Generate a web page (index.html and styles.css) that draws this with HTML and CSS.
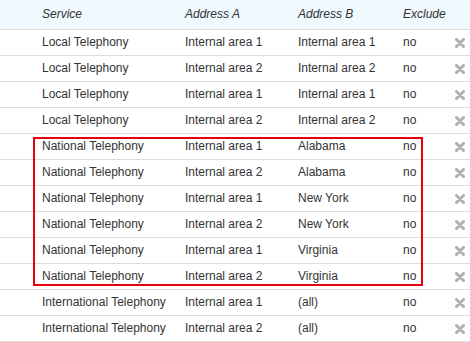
FILE: index.html
```html
<!DOCTYPE html>
<html>
<head>
<meta charset="utf-8">
<link rel="stylesheet" href="styles.css">
</head>
<body>
<div class="table">
  <div class="row head">
    <div></div>
    <div>Service</div>
    <div>Address A</div>
    <div>Address B</div>
    <div>Exclude</div>
    <div></div>
  </div>
  <div class="row"><div></div><div>Local Telephony</div><div>Internal area 1</div><div>Internal area 1</div><div>no</div><div class="act"><svg class="x" viewBox="0 0 10 10"><path d="M1.5 1.5L8.5 8.5M8.5 1.5L1.5 8.5"/></svg></div></div>
  <div class="row"><div></div><div>Local Telephony</div><div>Internal area 2</div><div>Internal area 2</div><div>no</div><div class="act"><svg class="x" viewBox="0 0 10 10"><path d="M1.5 1.5L8.5 8.5M8.5 1.5L1.5 8.5"/></svg></div></div>
  <div class="row"><div></div><div>Local Telephony</div><div>Internal area 1</div><div>Internal area 1</div><div>no</div><div class="act"><svg class="x" viewBox="0 0 10 10"><path d="M1.5 1.5L8.5 8.5M8.5 1.5L1.5 8.5"/></svg></div></div>
  <div class="row"><div></div><div>Local Telephony</div><div>Internal area 2</div><div>Internal area 2</div><div>no</div><div class="act"><svg class="x" viewBox="0 0 10 10"><path d="M1.5 1.5L8.5 8.5M8.5 1.5L1.5 8.5"/></svg></div></div>
  <div class="row"><div></div><div>National Telephony</div><div>Internal area 1</div><div>Alabama</div><div>no</div><div class="act"><svg class="x" viewBox="0 0 10 10"><path d="M1.5 1.5L8.5 8.5M8.5 1.5L1.5 8.5"/></svg></div></div>
  <div class="row"><div></div><div>National Telephony</div><div>Internal area 2</div><div>Alabama</div><div>no</div><div class="act"><svg class="x" viewBox="0 0 10 10"><path d="M1.5 1.5L8.5 8.5M8.5 1.5L1.5 8.5"/></svg></div></div>
  <div class="row"><div></div><div>National Telephony</div><div>Internal area 1</div><div>New York</div><div>no</div><div class="act"><svg class="x" viewBox="0 0 10 10"><path d="M1.5 1.5L8.5 8.5M8.5 1.5L1.5 8.5"/></svg></div></div>
  <div class="row"><div></div><div>National Telephony</div><div>Internal area 2</div><div>New York</div><div>no</div><div class="act"><svg class="x" viewBox="0 0 10 10"><path d="M1.5 1.5L8.5 8.5M8.5 1.5L1.5 8.5"/></svg></div></div>
  <div class="row"><div></div><div>National Telephony</div><div>Internal area 1</div><div>Virginia</div><div>no</div><div class="act"><svg class="x" viewBox="0 0 10 10"><path d="M1.5 1.5L8.5 8.5M8.5 1.5L1.5 8.5"/></svg></div></div>
  <div class="row"><div></div><div>National Telephony</div><div>Internal area 2</div><div>Virginia</div><div>no</div><div class="act"><svg class="x" viewBox="0 0 10 10"><path d="M1.5 1.5L8.5 8.5M8.5 1.5L1.5 8.5"/></svg></div></div>
  <div class="row"><div></div><div>International Telephony</div><div>Internal area 1</div><div>(all)</div><div>no</div><div class="act"><svg class="x" viewBox="0 0 10 10"><path d="M1.5 1.5L8.5 8.5M8.5 1.5L1.5 8.5"/></svg></div></div>
  <div class="row"><div></div><div>International Telephony</div><div>Internal area 2</div><div>(all)</div><div>no</div><div class="act"><svg class="x" viewBox="0 0 10 10"><path d="M1.5 1.5L8.5 8.5M8.5 1.5L1.5 8.5"/></svg></div></div>
  <div class="highlight"></div>
</div>
</body>
</html>
```
FILE: styles.css
```css
html, body {
  margin: 0;
  padding: 0;
  background: #fff;
}
body {
  font-family: "Liberation Sans", Arial, sans-serif;
  font-size: 12px;
  color: #333;
}
.table {
  position: relative;
  width: 470px;
}
.row {
  display: grid;
  grid-template-columns: 42px 143px 113px 105px 52px 15px;
  height: 25px;
  line-height: 25px;
  border-bottom: 1px solid #ddd;
  white-space: nowrap;
}
.row.head {
  height: 29px;
  line-height: 29px;
  background: #eff9fe;
  font-style: italic;
}
.act {
  display: flex;
  align-items: center;
}
.x {
  width: 10px;
  height: 10px;
}
.x path {
  stroke: #b0b0b0;
  stroke-width: 3;
  fill: none;
  stroke-linecap: round;
}
.highlight {
  position: absolute;
  left: 33px;
  top: 137px;
  width: 386px;
  height: 145px;
  border: 2px solid #e5000b;
}
```
